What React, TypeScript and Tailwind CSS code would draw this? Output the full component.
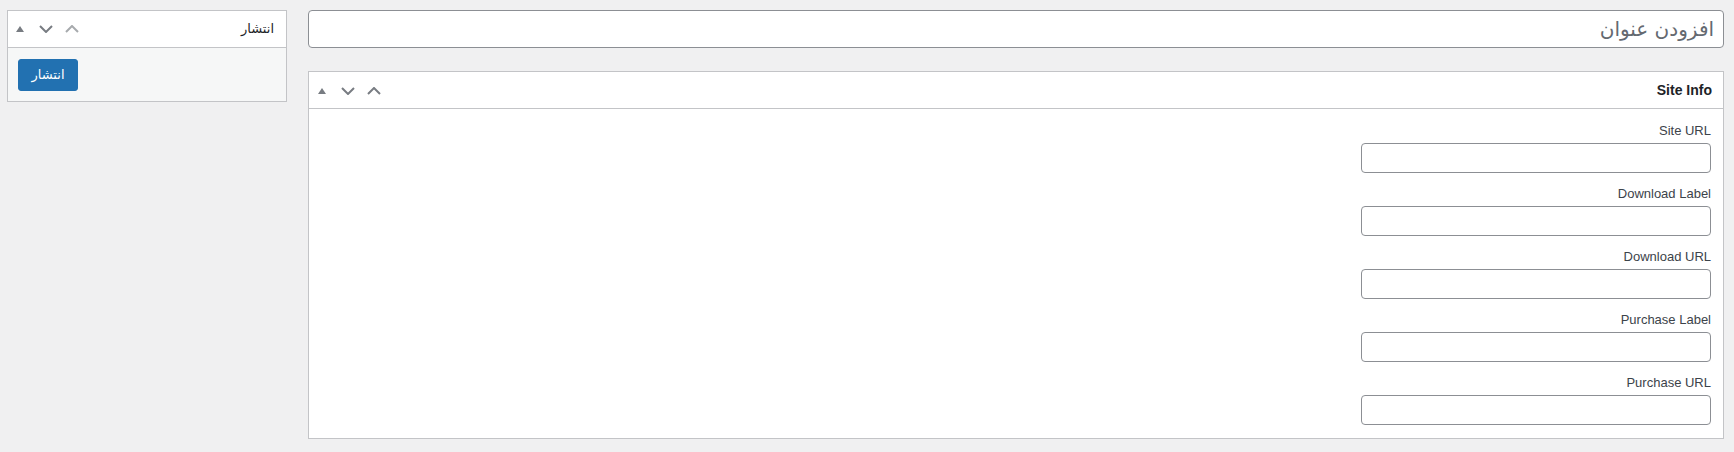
const fields = ['Site URL', 'Download Label', 'Download URL', 'Purchase Label', 'Purchase URL'];

function BoxControls({ upDisabled }: { upDisabled?: boolean }) {
  return (
    <div className="flex items-center gap-[12px]" dir="ltr">
      <svg width="8" height="6" viewBox="0 0 8 6">
        <path d="M0 6 L4 0 L8 6 Z" fill="#787c82" />
      </svg>
      <svg width="14" height="8" viewBox="0 0 14 8" className="ml-[3px]">
        <path d="M1 1 L7 7 L13 1" fill="none" stroke="#787c82" strokeWidth="2" />
      </svg>
      <svg width="14" height="8" viewBox="0 0 14 8">
        <path d="M1 7 L7 1 L13 7" fill="none" stroke={upDisabled ? '#a7aaad' : '#787c82'} strokeWidth="2" />
      </svg>
    </div>
  );
}

export default function App() {
  return (
    <div
      dir="rtl"
      className="min-h-[452px] bg-[#f0f0f1] flex items-start gap-[21px] pt-[10px] pr-[10px] pl-[7px]"
      style={{ fontFamily: '"Liberation Sans", "DejaVu Sans", sans-serif' }}
    >
      {/* main column */}
      <div className="flex-1 flex flex-col gap-[23px]">
        <div className="h-[38px] bg-white border border-[#8c8f94] rounded-[4px] flex items-center px-[9px]">
          <span className="text-[20px] text-[#646970] font-['DejaVu_Sans',sans-serif]">افزودن عنوان</span>
        </div>

        <div className="bg-white border border-[#c3c4c7]">
          <div className="h-[37px] border-b border-[#c3c4c7] flex items-center justify-between pr-[11px] pl-[9px]">
            <h2 className="text-[14px] font-bold text-[#1d2327]" dir="ltr">Site Info</h2>
            <div className="mt-[1px]">
              <BoxControls />
            </div>
          </div>
          <div className="pt-[12px] pb-[13px] pr-[12px] flex flex-col gap-[11px]">
            {fields.map((f) => (
              <div key={f} className="flex flex-col items-start">
                <label className="h-[20px] leading-[20px] text-[13px] text-[#3c434a] mb-[2px]" dir="ltr">{f}</label>
                <div className="w-[350px] h-[30px] border border-[#8c8f94] rounded-[4px] bg-white" />
              </div>
            ))}
          </div>
        </div>
      </div>

      {/* sidebar */}
      <div className="w-[280px] bg-white border border-[#c3c4c7]">
        <div className="h-[37px] border-b border-[#c3c4c7] flex items-center justify-between pr-[12px] pl-[8px]">
          <h2 className="text-[13px] text-[#1d2327] font-['DejaVu_Sans',sans-serif]">انتشار</h2>
          <BoxControls upDisabled />
        </div>
        <div className="bg-[#f6f7f7] pt-[11px] pb-[10px] pl-[10px] flex justify-end">
          <button className="w-[60px] h-[32px] bg-[#2271b1] border border-[#2271b1] rounded-[3px] text-white text-[13px] font-['DejaVu_Sans',sans-serif]">
            انتشار
          </button>
        </div>
      </div>
    </div>
  );
}
